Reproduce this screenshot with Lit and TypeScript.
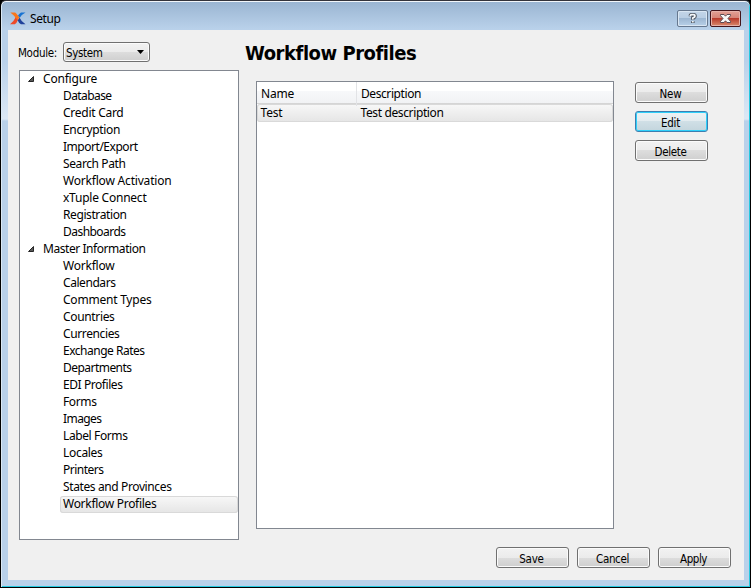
import { LitElement, html, css, svg } from "lit";
import { customElement, property } from "lit/decorators.js";
import { classMap } from "lit/directives/class-map.js";

type Label = [text: string, width: number];

interface Group {
  title: Label;
  items: Label[];
}

const GROUPS: Group[] = [
  {
    title: ["Configure", 54],
    items: [["Database", 48.5], ["Credit Card", 60.5], ["Encryption", 57], ["Import/Export", 74.5],
      ["Search Path", 62.5], ["Workflow Activation", 108.5], ["xTuple Connect", 83.5],
      ["Registration", 63.5], ["Dashboards", 62.5]],
  },
  {
    title: ["Master Information", 102.5],
    items: [["Workflow", 51.5], ["Calendars", 52.5], ["Comment Types", 88.5], ["Countries", 51.5],
      ["Currencies", 56.5], ["Exchange Rates", 81.5], ["Departments", 68.5], ["EDI Profiles", 59.5],
      ["Forms", 33.5], ["Images", 38.5], ["Label Forms", 64.5], ["Locales", 39.5], ["Printers", 40.5],
      ["States and Provinces", 108.5], ["Workflow Profiles", 93.5]],
  },
];

/** One line of text whose tracking is set so that it fills the given width. */
@customElement("fit-text")
export class FitText extends LitElement {
  @property() text = "";
  @property({ type: Number }) width = 0;

  static styles = css`
    :host { display: inline-block; white-space: nowrap; letter-spacing: 0; }
    .run { display: inline-block; }
  `;

  render() {
    return html`<span class="run">${this.text}</span>`;
  }

  updated() {
    const run = this.renderRoot.querySelector<HTMLElement>(".run")!;
    run.style.letterSpacing = "0px";
    const natural = run.getBoundingClientRect().width;
    run.style.letterSpacing = `${(this.width - natural) / this.text.length}px`;
  }
}

@customElement("push-button")
export class PushButton extends LitElement {
  @property() label = "";
  @property({ type: Number }) fit = 0;
  @property({ type: Boolean }) active = false;

  static styles = css`
    :host { display: block; }
    .btn {
      display: flex;
      justify-content: center;
      align-items: flex-start;
      box-sizing: border-box;
      width: 73px;
      height: 21px;
      margin: 0;
      padding: 2px 2px 0 0;
      border: 1px solid #707070;
      border-radius: 3px;
      background: linear-gradient(#f2f2f2 0, #ebebeb 50%, #dddddd 50%, #cfcfcf 100%);
      box-shadow: inset 0 0 0 1px #fbfbfb;
      font: 11.5px/18px "DejaVu Sans Condensed", "DejaVu Sans", sans-serif;
      font-stretch: condensed;
      color: #000;
    }
    .active {
      border-color: #3c7fb1;
      background: linear-gradient(#edf2f4 0, #e2ebef 50%, #d0dfe6 50%, #c3d5dd 100%);
      box-shadow: inset 0 0 0 1px #2fd0fa;
    }
  `;

  render() {
    return html`<button class=${classMap({ btn: true, active: this.active })}><fit-text
      text=${this.label} width=${this.fit}></fit-text></button>`;
  }
}

@customElement("nav-tree")
export class NavTree extends LitElement {
  @property() selected = "";

  static styles = css`
    :host {
      display: block;
      box-sizing: border-box;
      width: 220px;
      height: 470px;
      border: 1px solid #828790;
      background: #fff;
      font: 12px/15px "Noto Sans", "Open Sans", sans-serif;
    }
    .group { display: flex; height: 17px; }
    .arrow { width: 6px; height: 6px; margin: 5px 9px 0 8px; }
    .item {
      height: 17px;
      margin-left: 40px;
      padding-left: 3px;
    }
    .picked {
      border-radius: 3px;
      box-shadow: inset 0 0 0 1px #d9d9d9;
      background: linear-gradient(#f8f8f8, #e5e5e5);
    }
  `;

  render() {
    return html`${GROUPS.map((g) => html`
      <div class="group">
        <svg class="arrow" viewBox="0 0 6 6"><path d="M5.5 .5V5.5H.5Z" fill="#595959" stroke="#262626" /></svg>
        <fit-text text=${g.title[0]} width=${g.title[1]}></fit-text>
      </div>
      ${g.items.map(([text, width]) => html`
        <div class=${classMap({ item: true, picked: text === this.selected })}><fit-text
          text=${text} width=${width}></fit-text></div>`)}
    `)}`;
  }
}

const logo = svg`
  <path d="M0.3 .5H5Q6.5 1 8.8 5L6.4 8Q4.5 3 0.3 .5Z" fill="#f9761c" />
  <path d="M15.5 .5H11Q9.5 1.5 8 3.5L9.6 6Q11.5 2.5 15.5 .5Z" fill="#1672d2" />
  <path d="M0 12.3Q3.5 10 5.5 5.5L8.2 7.5Q6.5 11.5 4.8 12.3Z" fill="#ee4a29" />
  <path d="M15.5 12.3H11Q8.8 11 7.6 8.2L9.6 5.8Q11.5 10 15.5 12.3Z" fill="#20429b" />
  <path d="M4 1L9.5 5.2L7.8 8L5.5 5.5Z" fill="#f9761c" />`;

@customElement("app-root")
export class AppRoot extends LitElement {
  static styles = css`
    :host {
      display: block;
      width: 751px;
      height: 588px;
      background: #000;
      color: #000;
      font: 12px/17px "Noto Sans", "Open Sans", sans-serif;
    }
    .window {
      box-sizing: border-box;
      height: 588px;
      padding: 0 6px 6px;
      border: 1px solid #000;
      border-top-color: #33333b;
      border-radius: 6px 6px 0 0;
      background:
        linear-gradient(#99b4d1 0, #b9d1ea 28px, transparent 28px),
        linear-gradient(#b9d1ea 0, #b9d1ea 60px, #dce8f5 118px, #b9d1ea 120px);
      box-shadow: inset 0 1px #f2f6fa, inset 1px 0 #dbe9f5, inset -1px -1px #25c9e0;
    }
    .titlebar { display: flex; height: 29px; }
    .logo { width: 16px; height: 13px; margin: 11px 4px 0 3px; }
    .caption { flex: 1; padding-top: 9px; }
    .tools { display: flex; gap: 2px; padding: 9px 3px 0 0; }
    .tool {
      box-sizing: border-box;
      width: 31px;
      height: 17px;
      border: 1px solid #66788f;
      border-radius: 2px;
      background: linear-gradient(#c3d5e8 0, #b8cde3 50%, #9db7d2 50%, #b8d0e8 100%);
      box-shadow: inset 0 0 0 1px #d9e6f3;
    }
    .close {
      border-color: #43141a;
      background: linear-gradient(#e3a196 0, #d68376 48%, #b8382a 48%, #d98b6d 100%);
      box-shadow: inset 0 0 0 1px #e6b1a9;
    }
    .glyph { display: block; width: 29px; height: 15px; }
    .client {
      display: flow-root;
      box-sizing: border-box;
      height: 550px;
      margin: 0 0 0 1px;
      padding: 11px 12px 0 11px;
      background: #f0f0f0;
    }
    .columns { display: flex; height: 499px; }
    .module {
      display: flex;
      height: 22px;
      margin: 0 0 7px -1px;
      align-items: flex-start;
      font: 11.5px/18px "DejaVu Sans Condensed", "DejaVu Sans", sans-serif;
      font-stretch: condensed;
    }
    .prompt { width: 45px; padding-top: 3px; }
    .combo {
      display: flex;
      box-sizing: border-box;
      justify-content: space-between;
      align-items: flex-start;
      width: 87px;
      height: 20px;
      margin-top: 1px;
      padding: 1px 5px 0 2px;
      border: 1px solid #707070;
      border-radius: 3px;
      background: linear-gradient(#f2f2f2 0, #ebebeb 50%, #dddddd 50%, #cfcfcf 100%);
      box-shadow: inset 0 0 0 1px #fbfbfb;
    }
    .drop { width: 7px; height: 4px; margin-top: 6px; }
    .left { width: 220px; }
    .main { width: 358px; margin-left: 17px; }
    .heading {
      height: 40px;
      margin: 0 0 0 -11px;
      font: bold 20px/24px "DejaVu Sans Condensed", "DejaVu Sans", sans-serif;
      font-stretch: condensed;
    }
    .table {
      box-sizing: border-box;
      height: 448px;
      border: 1px solid #828790;
      background: #fff;
    }
    .row { display: grid; grid-template-columns: 100px 1fr; }
    .head {
      height: 22px;
      box-sizing: border-box;
      border-bottom: 1px solid #d5d5d5;
      background: linear-gradient(#fff 0, #fff 45%, #f7f8fa 45%, #f1f2f4 100%);
      line-height: 24px;
    }
    .th { padding-left: 4px; border-right: 1px solid #e2e3e6; }
    .th + .th { border: 0; }
    .data {
      height: 18px;
      border-radius: 3px;
      box-shadow: inset 0 0 0 1px #d9d9d9;
      background: linear-gradient(#f8f8f8, #e5e5e5);
      line-height: 18px;
    }
    .td { padding-left: 3.5px; }
    .side { display: flex; flex-direction: column; gap: 8px; margin: 41px 0 0 21px; }
    .footer { display: flex; justify-content: flex-end; gap: 8px; margin: 7px 1px 0 0; }
  `;

  render() {
    return html`
      <div class="window">
        <div class="titlebar">
          <svg class="logo" viewBox="0 0 16 13">${logo}</svg>
          <div class="caption"><fit-text text="Setup" width="30.5"></fit-text></div>
          <div class="tools">
            <div class="tool">
              <svg class="glyph" viewBox="0 0 29 15">
                <path d="M12.5 5.2V4.7Q12.5 3.7 13.5 3.7H15.5Q17 3.7 17 5Q17 6.3 14.800 7V8.8M14.800 10.2V12" fill="none" stroke="#4b535e" stroke-width="3.6" />
                <path d="M12.3 5V4.7Q12.5 3.7 13.5 3.7H15.5Q17 3.7 17 5Q17 6.300 14.800 7V8.5M14.800 10V11.5" fill="none" stroke="#f6f8fa" stroke-width="1.8" />
              </svg>
            </div>
            <div class="tool close">
              <svg class="glyph" viewBox="0 0 29 15">
                <path d="M9.5 3.500H13L14.500 5.200L16 3.500H19.500V4.700L17 7.500L19.500 10.300V11.500H16L14.500 9.800L13 11.500H9.500V10.300L12 7.500L9.500 4.700Z" fill="#f8f8f8" stroke="#5c4a52" />
              </svg>
            </div>
          </div>
        </div>
        <div class="client">
          <div class="columns">
            <div class="left">
              <div class="module">
                <span class="prompt"><fit-text text="Module:" width="39"></fit-text></span>
                <div class="combo">
                  <fit-text text="System" width="36.5"></fit-text>
                  <svg class="drop" viewBox="0 0 7 4"><path d="M0 0H7L3.5 4Z" /></svg>
                </div>
              </div>
              <nav-tree selected="Workflow Profiles"></nav-tree>
            </div>
            <div class="main">
              <h1 class="heading"><fit-text text="Workflow Profiles" width="170"></fit-text></h1>
              <div class="table">
                <div class="row head">
                  <span class="th"><fit-text text="Name" width="33"></fit-text></span>
                  <span class="th"><fit-text text="Description" width="60"></fit-text></span>
                </div>
                <div class="row data">
                  <span class="td"><fit-text text="Test" width="22"></fit-text></span>
                  <span class="td"><fit-text text="Test description" width="83"></fit-text></span>
                </div>
              </div>
            </div>
            <div class="side">
              <push-button label="New" fit="22"></push-button>
              <push-button label="Edit" fit="19"></push-button>
              <push-button label="Delete" fit="32"></push-button>
            </div>
          </div>
          <div class="footer">
            <push-button label="Save" fit="24.5"></push-button>
            <push-button label="Cancel" fit="33"></push-button>
            <push-button label="Apply" fit="27"></push-button>
          </div>
        </div>
      </div>
    `;
  }

  async firstUpdated() {
    const edit = this.renderRoot.querySelector<PushButton>('push-button[label="Edit"]')!;
    edit.active = true;
  }
}
